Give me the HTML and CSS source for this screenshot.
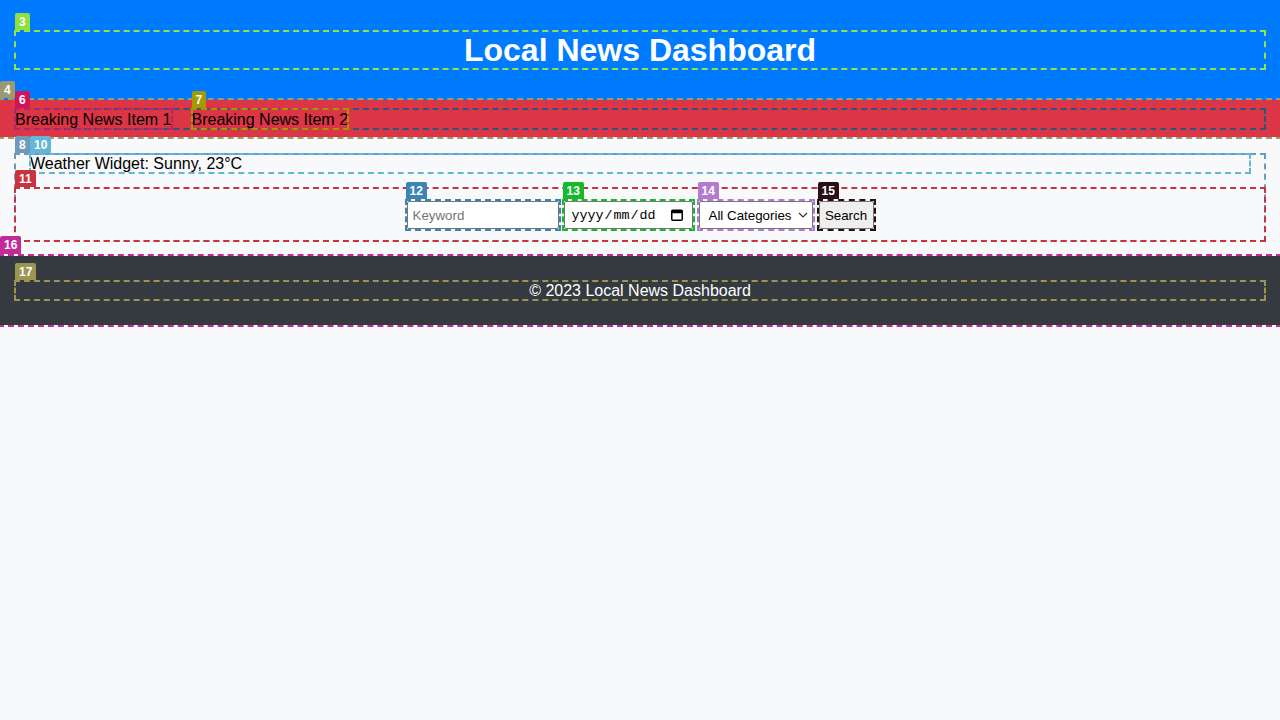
FILE: index.html
```html
<!DOCTYPE html>
<html lang="en">
<head>
<meta charset="utf-8">
<title>Local News Dashboard</title>
<link rel="stylesheet" href="styles.css">
</head>
<body>
<header class="site-header">
  <h1 class="title tagged t3"><span class="badge b3">3</span>Local News Dashboard</h1>
</header>
<section class="ticker tagged t4">
  <span class="badge b4">4</span>
  <div class="ticker-inner tagged t5">
    <span class="ticker-item tagged t6"><span class="badge b6">6</span>Breaking News Item 1</span>
    <span class="ticker-item tagged t7"><span class="badge b7">7</span>Breaking News Item 2</span>
  </div>
</section>
<main class="main tagged t8">
  <span class="badge b8">8</span>
  <div class="weather tagged t10"><span class="badge b10">10</span>Weather Widget: Sunny, 23°C</div>
  <form class="search tagged t11">
    <span class="badge b11">11</span>
    <span class="field f-keyword tagged t12"><span class="badge b12">12</span><input class="ctl keyword" type="text" placeholder="Keyword"></span>
    <span class="field f-date tagged t13"><span class="badge b13">13</span><span class="ctl date"><span class="date-text"><span>yyyy</span><span class="sep">/</span><span>mm</span><span class="sep">/</span><span>dd</span></span><svg class="cal" width="12" height="12" viewBox="0 0 12 12"><rect x="0.75" y="1.25" width="10.5" height="10" rx="1" fill="none" stroke="#000" stroke-width="1.5"/><rect x="0.75" y="1.25" width="10.5" height="3" fill="#000"/></svg></span></span>
    <span class="field f-select tagged t14"><span class="badge b14">14</span><span class="ctl select"><span>All Categories</span><svg width="10" height="6" viewBox="0 0 10 6"><path d="M1 1l4 4 4-4" fill="none" stroke="#333" stroke-width="1.2"/></svg></span></span>
    <span class="field f-btn tagged t15"><span class="badge b15">15</span><button class="ctl btn" type="button">Search</button></span>
  </form>
</main>
<footer class="footer tagged t16">
  <span class="badge b16">16</span>
  <p class="copy tagged t17"><span class="badge b17">17</span>© 2023 Local News Dashboard</p>
</footer>
</body>
</html>
```
FILE: styles.css
```css
* { box-sizing: border-box; }
html { background: #f8f9fa; }
body {
  margin: 0;
  padding-bottom: 4px;
  background: #f8f9fa;
  font-family: "Liberation Sans", Arial, sans-serif;
  font-size: 16px;
  color: #000;
}
.tagged { position: relative; outline: 2px dashed; outline-offset: -2px; }
.badge {
  position: absolute;
  top: -17px;
  left: 1px;
  height: 17px;
  padding: 0 4px;
  border-radius: 2px 2px 0 0;
  color: #fff;
  font: bold 12px/18px "Liberation Sans", Arial, sans-serif;
  z-index: 5;
}
.t3 { outline-color: #95e244; } .b3 { background: #8fe03c; }
.t4 { outline-color: #9d9b6e; outline-offset: 0; } .b4 { background: #9a9a70; left: 0; top: -19px; }
.t5 { outline-color: #27577e; }
.t6 { outline-color: #b3246a; } .b6 { background: #d0145a; }
.t7 { outline-color: #a39a00; } .b7 { background: #a39a00; }
.t8 { outline-color: #6d99bd; } .b8 { background: #6d99bd; }
.t10 { outline-color: #62b6d6; } .b10 { background: #62b6d6; }
.t11 { outline-color: #c9323f; } .b11 { background: #c9323f; }
.t12 { outline-color: #3b84b3; } .b12 { background: #3b84b3; }
.t13 { outline-color: #15b92a; } .b13 { background: #15b92a; }
.t14 { outline-color: #b47ad0; } .b14 { background: #b47ad0; }
.t15 { outline-color: #2a1016; } .b15 { background: #2a1016; }
.t16 { outline-color: #c12b9a; outline-offset: 0; } .b16 { background: #c12b9a; left: 0; top: -20px; height: 18px; }
.t17 { outline-color: #9b9552; } .b17 { background: #9b9552; }

.site-header {
  background: #007bff;
  padding: 30px 14px 30px;
}
.title {
  margin: 0;
  height: 40px;
  font-size: 32px;
  line-height: 40px;
  font-weight: bold;
  color: #fff;
  text-align: center;
}
.ticker {
  background: #dc3545;
  padding: 8px 14px 7px;
}
.ticker-inner {
  display: flex;
  gap: 18px;
  height: 22px;
  line-height: 23px;
}
.ticker-item { padding: 0 1px; }
.main {
  margin: 16px 14px 14px;
}
.weather {
  margin: 0 15px;
  height: 21px;
  line-height: 21px;
  padding-left: 1px;
}
.search {
  margin-top: 13px;
  padding: 12px 0 11px;
  display: flex;
  justify-content: center;
  gap: 2px;
}
.field {
  display: flex;
  padding: 2px;
  height: 32px;
}
.f-keyword { margin-right: -1px; }
.ctl {
  height: 28px;
  font: 13.33px "Liberation Sans", Arial, sans-serif;
  border: 1px solid #767676;
  border-radius: 2px;
  background: #fff;
  color: #000;
}
.keyword { width: 152px; padding: 0 5px; }
.keyword::placeholder { color: #757575; }
.date {
  width: 129px;
  display: flex;
  align-items: center;
  justify-content: space-between;
  padding: 0 9px 0 7px;
  font-family: "Liberation Mono", "Courier New", monospace;
}
.date-text { display: flex; }
.sep { margin: 0 1px; }
.select {
  width: 114px;
  display: flex;
  align-items: center;
  justify-content: space-between;
  padding: 0 4px 0 9px;
}
.btn {
  width: 55px;
  padding: 0;
  background: #efefef;
}
.footer {
  background: #343a40;
  padding: 24px 14px;
}
.copy {
  margin: 0;
  height: 21px;
  line-height: 21px;
  color: #fff;
  text-align: center;
}
```
